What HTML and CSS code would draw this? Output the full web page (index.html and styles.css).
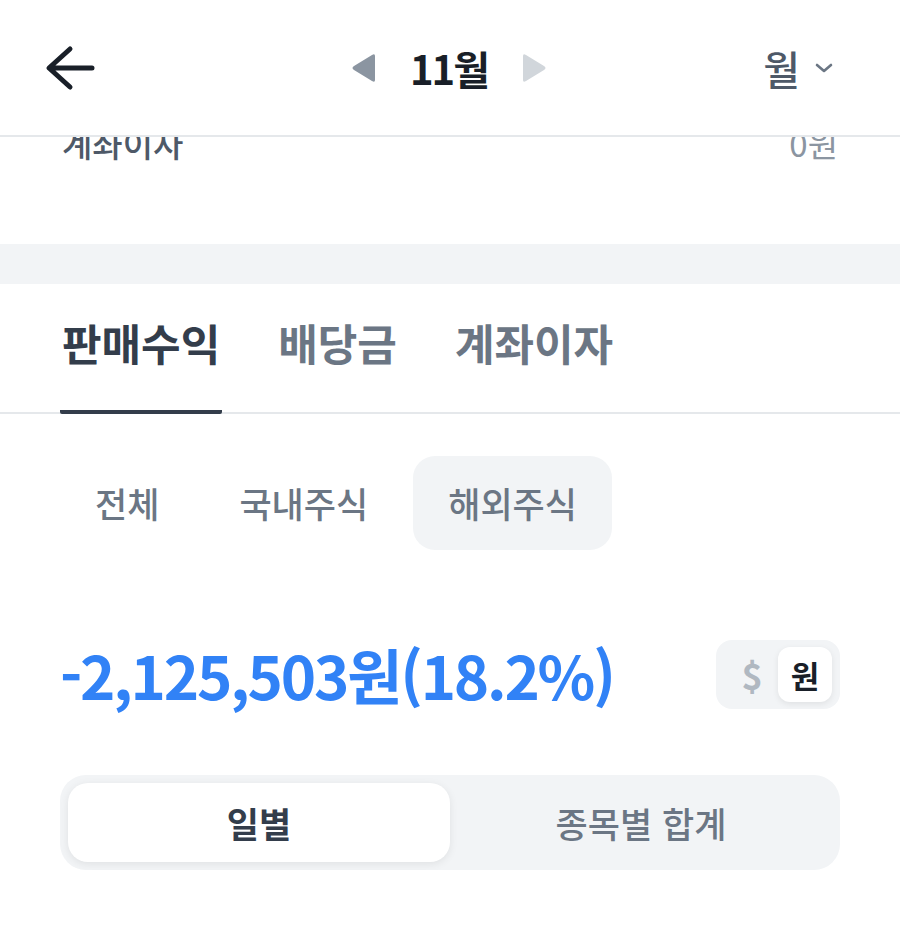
FILE: index.html
```html
<!DOCTYPE html>
<html lang="ko">
<head>
    <meta charset="UTF-8">
    <meta name="viewport" content="width=device-width, initial-scale=1.0">
    <title>판매수익</title>
    <link rel="stylesheet" href="styles.css">
</head>
<body>
    <header class="top-bar">
        <button class="back-button" aria-label="뒤로">
            <svg width="52" height="46" viewBox="0 0 52 46">
                <path d="M26 4 L5 23 L26 42 M6 23 H48" fill="none" stroke="#191f28" stroke-width="5" stroke-linecap="round" stroke-linejoin="round"/>
            </svg>
        </button>
        <div class="month-nav">
            <svg class="arrow" width="26" height="30" viewBox="0 0 26 30">
                <path d="M24 3 Q24 0 21 2 L3 13 Q0 15 3 17 L21 28 Q24 30 24 27 Z" fill="#8b95a1"/>
            </svg>
            <span class="month-label">11월</span>
            <svg class="arrow" width="26" height="30" viewBox="0 0 26 30">
                <path d="M2 3 Q2 0 5 2 L23 13 Q26 15 23 17 L5 28 Q2 30 2 27 Z" fill="#d1d6db"/>
            </svg>
        </div>
        <div class="period-select">
            <span>월</span>
            <svg width="20" height="12" viewBox="0 0 20 12">
                <path d="M3 3 L10 9 L17 3" fill="none" stroke="#6b7684" stroke-width="2.6" stroke-linecap="round" stroke-linejoin="round"/>
            </svg>
        </div>
    </header>

    <div class="clipped-row">
        <div class="summary-row">
            <span class="summary-label">계좌이자</span>
            <span class="summary-value">0원</span>
        </div>
    </div>

    <div class="divider-band"></div>

    <nav class="tabs">
        <div class="tab active">판매수익</div>
        <div class="tab">배당금</div>
        <div class="tab">계좌이자</div>
    </nav>

    <div class="chips">
        <div class="chip">전체</div>
        <div class="chip">국내주식</div>
        <div class="chip selected">해외주식</div>
    </div>

    <div class="amount-row">
        <div class="amount">-2,125,503원(18.2%)</div>
        <div class="currency-toggle">
            <span class="currency">$</span>
            <span class="currency on">원</span>
        </div>
    </div>

    <div class="segmented">
        <div class="segment on">일별</div>
        <div class="segment">종목별 합계</div>
    </div>
</body>
</html>
```

FILE: styles.css
```css
body {
    margin: 0;
    background: #ffffff;
    font-family: "Noto Sans CJK KR", "Noto Sans", sans-serif;
    color: #191f28;
    width: 900px;
}

.top-bar {
    height: 135px;
    display: grid;
    grid-template-columns: 1fr auto 1fr;
    align-items: center;
    padding: 0 66px 0 44px;
    border-bottom: 2px solid #e5e8eb;
}

.back-button {
    background: none;
    border: none;
    padding: 0;
    display: flex;
    align-items: center;
}

.month-nav {
    display: flex;
    align-items: center;
    gap: 33px;
    margin-left: 20px;
}

.month-label {
    font-size: 40px;
    font-weight: 700;
    letter-spacing: -2px;
    color: #191f28;
}

.period-select {
    display: flex;
    align-items: center;
    justify-content: flex-end;
    gap: 14px;
    font-size: 40px;
    font-weight: 500;
    color: #4e5968;
}

.clipped-row {
    height: 107px;
    overflow: hidden;
}

.summary-row {
    display: flex;
    justify-content: space-between;
    padding: 0 62px;
    margin-top: -17px;
    font-size: 33px;
    line-height: 46px;
}

.summary-label {
    color: #4e5968;
    font-weight: 500;
}

.summary-value {
    color: #8b95a1;
}

.divider-band {
    height: 40px;
    background: #f2f4f6;
}

.tabs {
    display: flex;
    gap: 54px;
    padding: 0 60px;
    border-bottom: 2px solid #e5e8eb;
}

.tab {
    font-size: 43px;
    font-weight: 700;
    color: #6b7684;
    padding: 24px 2px 34px;
    line-height: 68px;
}

.tab.active {
    color: #333d4b;
    border-bottom: 4px solid #333d4b;
    margin-bottom: -2px;
    border-radius: 2px;
}

.chips {
    display: flex;
    padding: 42px 60px 0;
}

.chip {
    font-size: 35px;
    font-weight: 500;
    color: #6b7684;
    padding: 0 35px;
    height: 94px;
    line-height: 94px;
    border-radius: 22px;
    margin-right: 10px;
}

.chip.selected {
    background: #f2f4f6;
}

.amount-row {
    display: flex;
    align-items: center;
    justify-content: space-between;
    padding: 89px 60px 0;
}

.amount {
    font-size: 60px;
    font-weight: 700;
    color: #3182f6;
    letter-spacing: -2.2px;
    line-height: 70px;
}

.currency-toggle {
    display: flex;
    align-items: center;
    gap: 12px;
    background: #f2f4f6;
    border-radius: 16px;
    padding: 7px 8px 7px 22px;
}

.currency {
    font-size: 36px;
    font-weight: 700;
    color: #b0b8c1;
    width: 28px;
    text-align: center;
}

.currency.on {
    width: 54px;
    height: 55px;
    line-height: 55px;
    background: #ffffff;
    color: #191f28;
    border-radius: 12px;
    font-size: 31px;
    box-shadow: 0 2px 6px rgba(0, 0, 0, 0.08);
}

.segmented {
    display: flex;
    margin: 66px 60px 0;
    padding: 8px;
    background: #f2f4f6;
    border-radius: 26px;
}

.segment {
    flex: 1;
    height: 79px;
    line-height: 79px;
    text-align: center;
    font-size: 35px;
    font-weight: 500;
    color: #6b7684;
}

.segment.on {
    background: #ffffff;
    color: #333d4b;
    font-weight: 700;
    border-radius: 20px;
    box-shadow: 0 2px 8px rgba(0, 0, 0, 0.08);
}
```
